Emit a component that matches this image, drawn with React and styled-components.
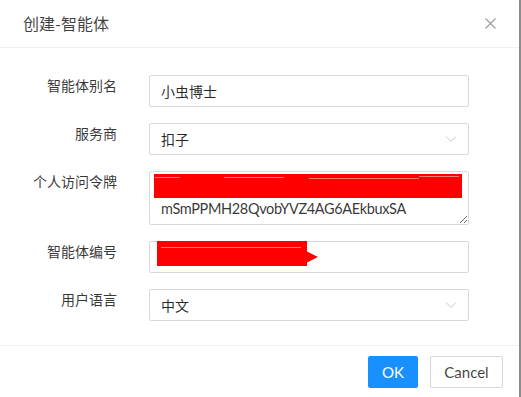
import React from 'react';
import styled, { createGlobalStyle } from 'styled-components';

const GlobalStyle = createGlobalStyle`
  html, body {
    margin: 0;
    padding: 0;
    background: #fff;
  }
  body {
    font-family: Lato, "Noto Sans CJK SC", sans-serif;
    font-size: 14px;
    color: rgba(0, 0, 0, 0.85);
  }
`;

const Page = styled.div`
  display: flex;
  width: 521px;
  height: 397px;
  overflow: hidden;
`;

const Modal = styled.div`
  width: 519px;
  display: flex;
  flex-direction: column;
  background: #fff;
`;

const ScrollEdge = styled.div`
  width: 2px;
  background: #8c8c8c;
`;

const Header = styled.div`
  height: 48px;
  display: flex;
  align-items: center;
  justify-content: space-between;
  padding: 0 22px 0 23px;
  border-bottom: 1px solid #f0f0f0;
  box-sizing: border-box;
`;

const Title = styled.div`
  font-size: 16px;
  color: rgba(0, 0, 0, 0.75);
  line-height: 22px;
`;

const Close = styled.button`
  border: none;
  background: none;
  padding: 0;
  width: 14px;
  height: 14px;
  display: flex;
  align-items: center;
  justify-content: center;
`;

const Body = styled.div`
  padding: 27px 0 24px;
  display: flex;
  flex-direction: column;
  gap: 16px;
  border-bottom: 1px solid #f0f0f0;
`;

const Row = styled.div`
  display: flex;
  align-items: flex-start;
`;

const Label = styled.label`
  width: 117px;
  text-align: right;
  line-height: 22px;
  padding-right: 32px;
  flex-shrink: 0;
  color: rgba(0, 0, 0, 0.8);
`;

const Field = styled.div`
  position: relative;
  width: 320px;
`;

const Input = styled.input`
  box-sizing: border-box;
  width: 100%;
  height: 32px;
  border: 1px solid #d9d9d9;
  border-radius: 2px;
  padding: 4px 11px;
  font: inherit;
  color: rgba(0, 0, 0, 0.85);
  outline: none;
`;

const TextArea = styled.textarea`
  box-sizing: border-box;
  display: block;
  width: 100%;
  height: 54px;
  border: 1px solid #d9d9d9;
  border-radius: 2px;
  padding: 4px 11px;
  font: inherit;
  font-size: 14.5px;
  letter-spacing: -0.35px;
  line-height: 22px;
  color: rgba(0, 0, 0, 0.8);
  outline: none;
  resize: vertical;
  overflow: hidden;
`;

const Select = styled.div`
  box-sizing: border-box;
  height: 32px;
  border: 1px solid #d9d9d9;
  border-radius: 2px;
  padding: 0 11px;
  display: flex;
  align-items: center;
  justify-content: space-between;
`;

const Redact = styled.div`
  position: absolute;
  background: #ff0000;
  left: ${p => p.left}px;
  top: ${p => p.top}px;
  width: ${p => p.w}px;
  height: ${p => p.h}px;
`;

const Streak = styled.div`
  position: absolute;
  height: 1px;
  background: rgba(255, 220, 220, 0.55);
  left: ${p => p.left}px;
  top: ${p => p.top}px;
  width: ${p => p.w}px;
`;

const Footer = styled.div`
  display: flex;
  justify-content: flex-end;
  gap: 12px;
  padding: 10px 16px 0;
`;

const Button = styled.button`
  box-sizing: border-box;
  height: 32px;
  padding: 0;
  border-radius: 2px;
  font: inherit;
  font-size: 15px;
  border: 1px solid ${p => (p.primary ? '#1890ff' : '#d9d9d9')};
  background: ${p => (p.primary ? '#1890ff' : '#fff')};
  color: ${p => (p.primary ? '#fff' : 'rgba(0, 0, 0, 0.75)')};
  width: ${p => (p.primary ? '50px' : '73px')};
`;

const Chevron = () => (
  <svg width="12" height="8" viewBox="0 0 12 8" fill="none">
    <path d="M1 1.5 L6 6.5 L11 1.5" stroke="#c8c8c8" strokeWidth="1" />
  </svg>
);

export default function App() {
  return (
    <Page>
      <GlobalStyle />
      <Modal>
        <Header>
          <Title>创建-智能体</Title>
          <Close>
            <svg width="11" height="11" viewBox="0 0 11 11">
              <path d="M0.5 0.5 L10.5 10.5 M10.5 0.5 L0.5 10.5" stroke="#9a9a9a" strokeWidth="1.1" />
            </svg>
          </Close>
        </Header>
        <Body>
          <Row>
            <Label>智能体别名</Label>
            <Field>
              <Input readOnly value="小虫博士" />
            </Field>
          </Row>
          <Row>
            <Label>服务商</Label>
            <Field>
              <Select>
                <span>扣子</span>
                <Chevron />
              </Select>
            </Field>
          </Row>
          <Row>
            <Label>个人访问令牌</Label>
            <Field>
              <TextArea
                readOnly
                value={'pat_xxxxxxxxxxxxxxxxxxxxxxxxxxxxxxxxxx\nmSmPPMH28QvobYVZ4AG6AEkbuxSA'}
              />
              <Redact left={5} top={3} w={308} h={24} />
              <Streak left={6} top={6} w={25} />
              <Streak left={75} top={6} w={60} />
              <Streak left={160} top={7} w={110} />
              <Streak left={270} top={5} w={40} />
            </Field>
          </Row>
          <Row>
            <Label>智能体编号</Label>
            <Field>
              <Input readOnly value="" />
              <Redact left={8} top={0} w={150} h={25} />
              <Streak left={12} top={6} w={140} />
              <svg
                width="12"
                height="12"
                viewBox="0 0 12 12"
                style={{ position: 'absolute', left: 157, top: 10 }}
              >
                <polygon points="0,0 12,6 0,12" fill="#ff0000" />
              </svg>
            </Field>
          </Row>
          <Row>
            <Label>用户语言</Label>
            <Field>
              <Select>
                <span>中文</span>
                <Chevron />
              </Select>
            </Field>
          </Row>
        </Body>
        <Footer>
          <Button primary>OK</Button>
          <Button>Cancel</Button>
        </Footer>
      </Modal>
      <ScrollEdge />
    </Page>
  );
}
